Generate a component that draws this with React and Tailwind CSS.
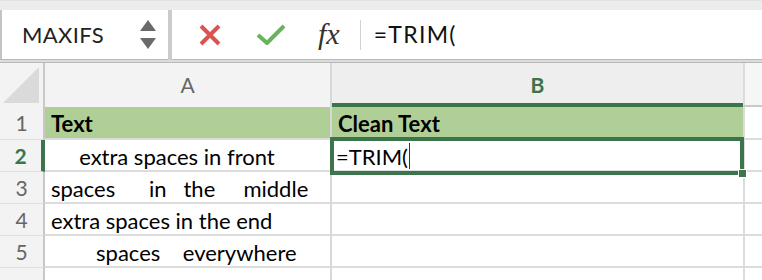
const sp = (n) => '\u00a0'.repeat(n);

const rows = [
  { n: 1, a: 'Text', b: 'Clean Text', head: true },
  { n: 2, a: sp(5) + 'extra spaces in front', b: '' },
  { n: 3, a: 'spaces' + sp(6) + 'in' + sp(3) + 'the' + sp(5) + 'middle', b: '' },
  { n: 4, a: 'extra spaces in the end', b: '' },
  { n: 5, a: sp(8) + 'spaces' + sp(4) + 'everywhere', b: '' },
  { n: 6, a: '', b: '' },
];

const App = () => {
  return (
    <div className="w-[762px] h-[280px] overflow-hidden bg-[#ececec] font-['Lato','Open_Sans',sans-serif] text-black">
      {/* Formula bar */}
      <div className="h-[59px] pt-[9px] flex border-t border-[#e2e2e2]">
        <div className="w-[168px] h-[49px] bg-white border-l-2 border-[#c4c4c4] flex items-center pl-[20px] pr-[12px]">
          <span className="text-[22px] text-[#222] tracking-[0.4px]">MAXIFS</span>
          <div className="ml-auto flex flex-col items-center gap-[7px]">
            <svg width="16" height="11" viewBox="0 0 16 11"><path d="M8 0 L16 11 L0 11 Z" fill="#6a6a6a" /></svg>
            <svg width="16" height="11" viewBox="0 0 16 11"><path d="M0 0 L16 0 L8 11 Z" fill="#6a6a6a" /></svg>
          </div>
        </div>
        <div className="w-[4px] h-[50px] bg-[#cbcbcb]" />
        <div className="flex-1 h-[49px] bg-white flex items-center">
          <svg className="ml-[26px]" width="24" height="24" viewBox="0 0 24 24">
            <path d="M3 3 L21 21 M21 3 L3 21" stroke="#d9534f" strokeWidth="4" strokeLinecap="butt" />
          </svg>
          <svg className="ml-[34px]" width="30" height="24" viewBox="0 0 30 24">
            <path d="M2 12 L11 20 L28 3" stroke="#69b35a" strokeWidth="4" fill="none" strokeLinejoin="round" />
          </svg>
          <span className="ml-[32px] font-['Liberation_Serif',serif] italic text-[30px] text-[#333] leading-none pb-[2px]">fx</span>
          <div className="ml-[20px] w-px h-[30px] bg-[#d2d2d2]" />
          <span className="ml-[13px] text-[23px] tracking-[1.3px] text-[#111]">=TRIM(</span>
        </div>
      </div>
      <div className="h-[4px] border-t border-b border-[#b9b9b9] bg-[#dcdcdc]" />

      {/* Sheet */}
      <div className="relative">
        <div className="grid grid-cols-[45px_287px_411px_1fr] grid-rows-[44px_33px_32px_32px_32px_32px_40px] bg-white">
          {/* header row */}
          <div className="bg-[#f3f3f3] border-r-2 border-[#c8c8c8] relative">
            <svg className="absolute right-[4px] bottom-[4px]" width="36" height="36" viewBox="0 0 36 36">
              <path d="M36 0 L36 36 L0 36 Z" fill="#dadada" />
            </svg>
          </div>
          <div className="bg-[#f3f3f3] border-r-2 border-[#d8d8d8] flex items-center justify-center text-[21px] text-[#666]">A</div>
          <div className="bg-[#eeeeee] border-b-[4px] border-[#3c744b] flex items-center justify-center text-[21px] font-bold text-[#3c744b] pt-[3px]">B</div>
          <div className="bg-[#f6f6f6] border-l-2 border-[#dcdcdc] border-b-2 border-b-[#c9c9c9]" />

          {rows.map((r) => (
            <RowCells key={r.n} r={r} />
          ))}
        </div>

        {/* selection */}
        <div className="absolute left-[330px] top-[74px] w-[414px] h-[38px] border-[4px] border-[#3c744b] pointer-events-none">
          <div className="absolute left-[2px] top-[1px] flex items-center h-[28px]">
            <span className="text-[22px] leading-[28px] pt-[2px]">=TRIM(</span>
            <div className="ml-[1px] w-px h-[26px] bg-[#333]" />
          </div>
          <div className="absolute -right-[7px] -bottom-[7px] w-[9px] h-[9px] bg-[#3c744b] border border-white" />
        </div>
      </div>
    </div>
  );
};

const RowCells = ({ r }) => {
  const active = r.n === 2;
  return (
    <>
      <div
        className={`flex items-center justify-center text-[21px] bg-[#f3f3f3] ${
          active ? 'border-r-[4px] border-[#3c744b] text-[#3c744b] font-bold' : 'border-r-2 border-[#c8c8c8] text-[#666]'
        } border-b border-b-[#dedede]`}
      >
        {r.n}
      </div>
      <div
        className={`flex items-center pl-[6px] pt-[2px] text-[22px] whitespace-pre border-r-2 border-[#d8d8d8] border-b-2 border-b-[#dcdcdc] ${
          r.head ? 'bg-[#b0cf97] font-bold border-b-0 border-r-0' : ''
        }`}
      >
        {r.a}
      </div>
      <div
        className={`flex items-center pl-[6px] pt-[2px] text-[22px] border-b-2 border-[#dcdcdc] ${
          r.head ? 'bg-[#b0cf97] font-bold border-b-0' : ''
        }`}
      >
        {r.b}
      </div>
      <div className="border-l-2 border-[#dcdcdc] border-b-2 border-b-[#dcdcdc]" />
    </>
  );
};

export default App;
